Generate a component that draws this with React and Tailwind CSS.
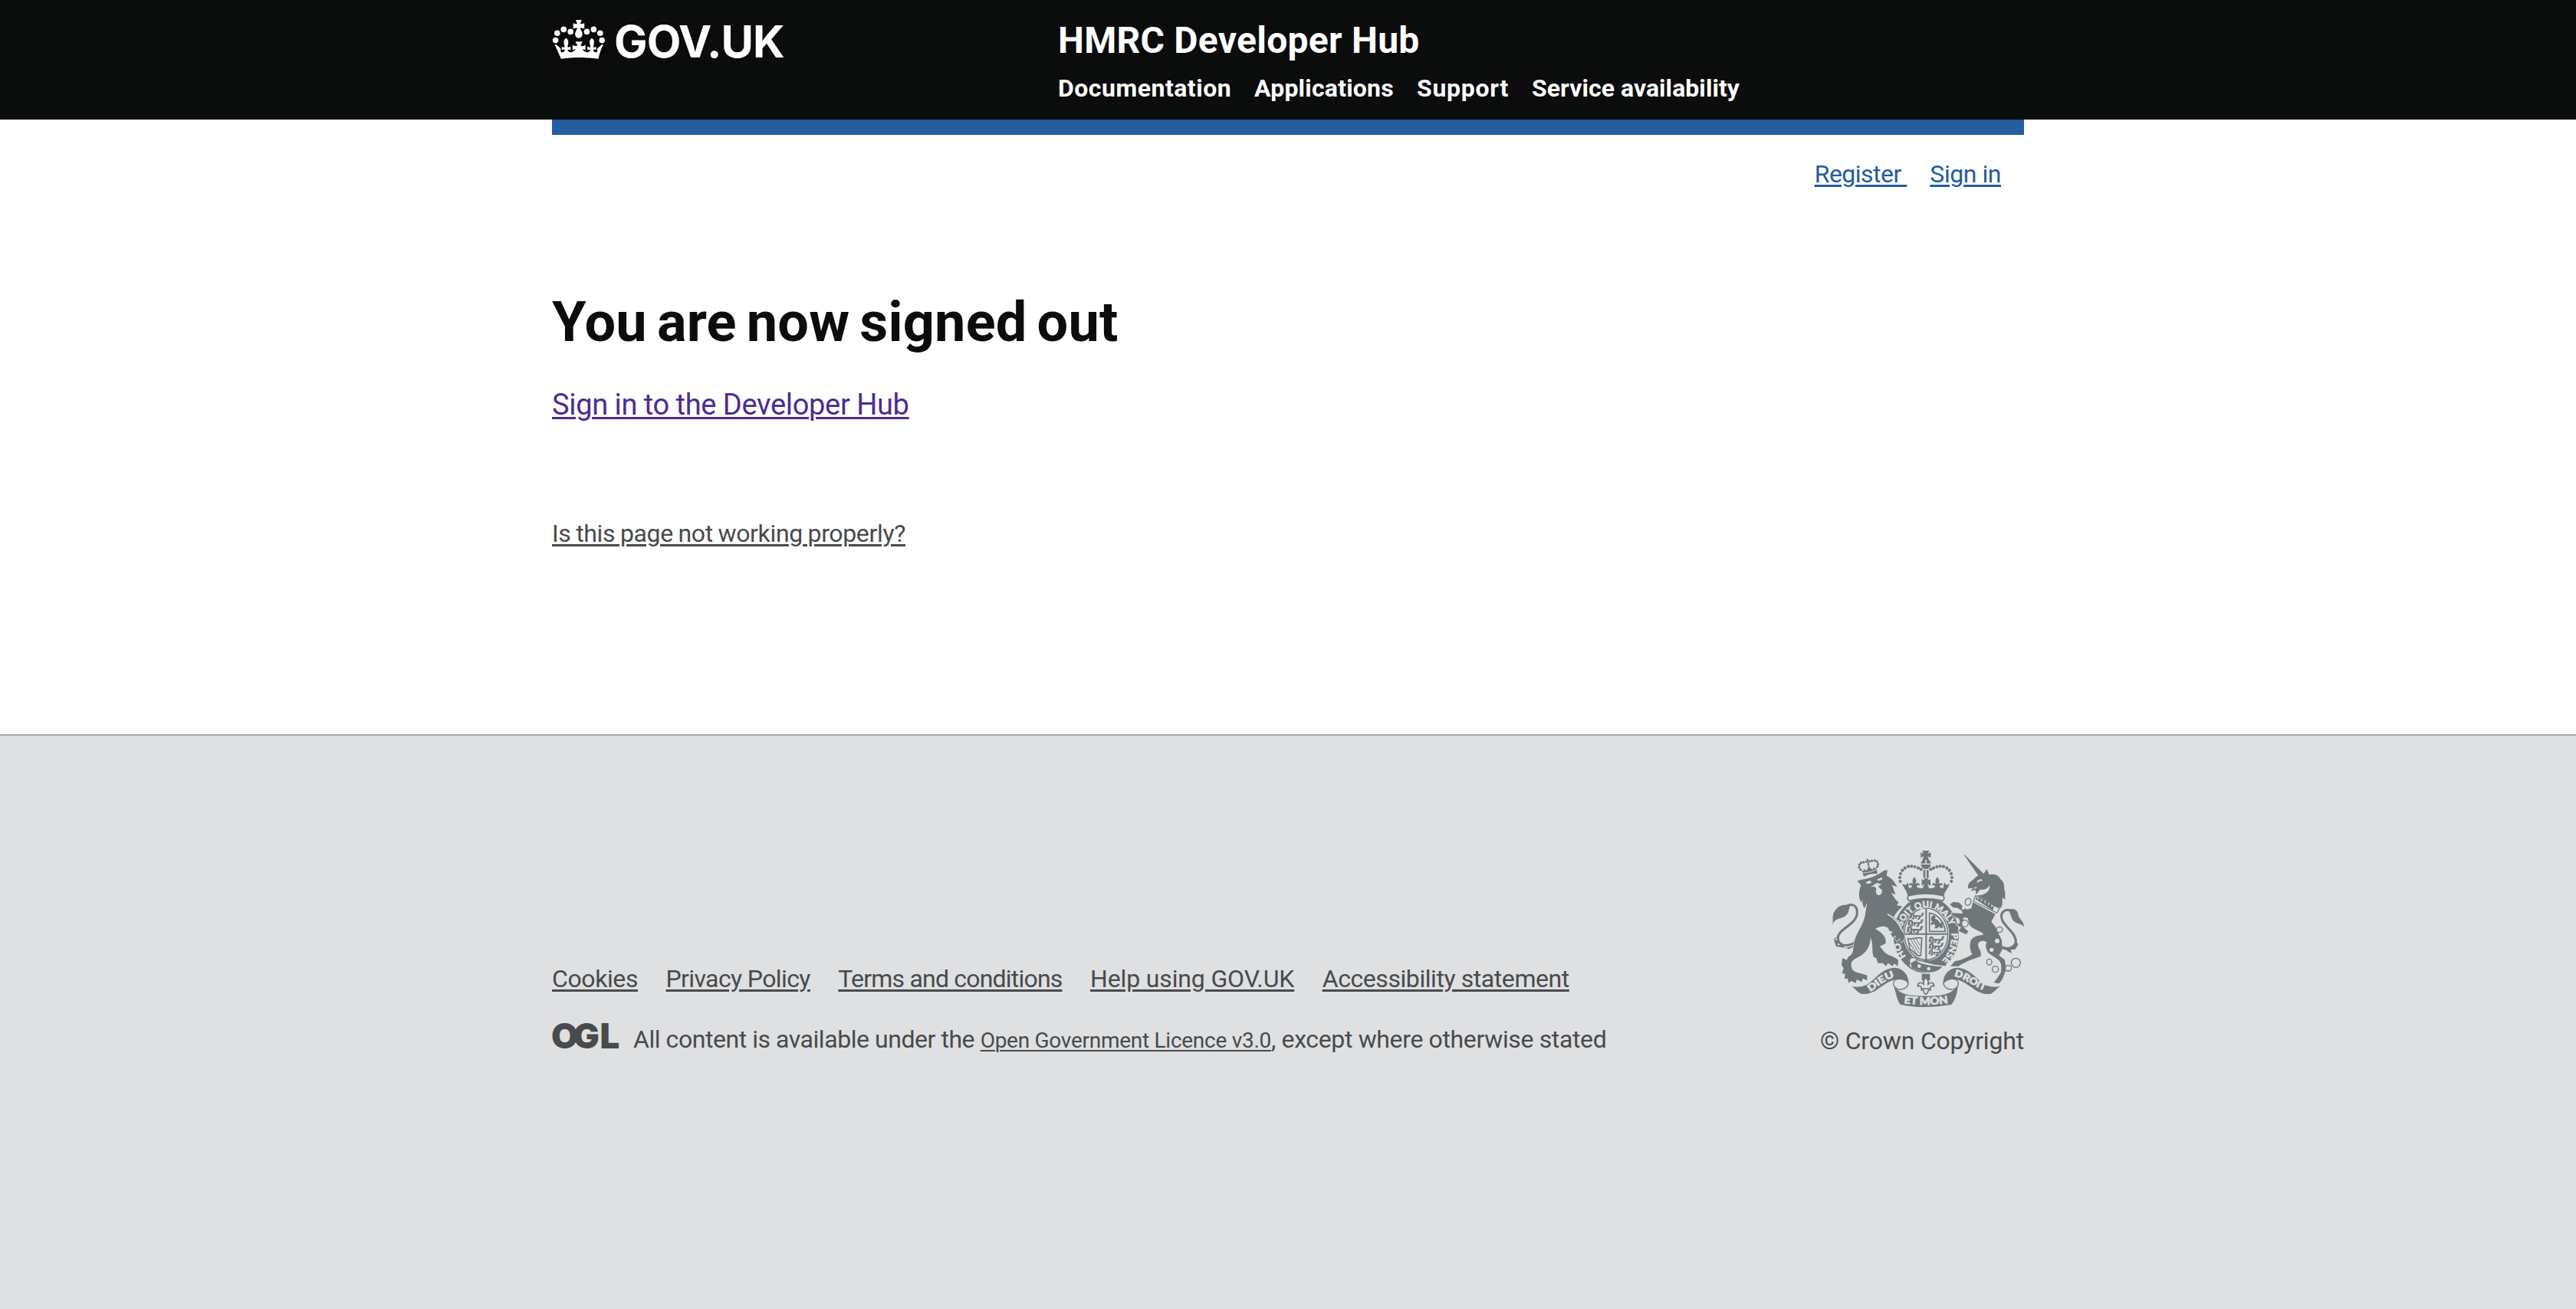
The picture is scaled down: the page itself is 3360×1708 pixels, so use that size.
const navItems = [
  { label: "Documentation", cls: "w-[226px] tracking-[0.5px]" },
  { label: "Applications", cls: "w-[182px] tracking-[0.2px]" },
  { label: "Support", cls: "w-[120px] tracking-[0.7px]" },
  { label: "Service availability", cls: "w-[272px] tracking-[0.05px]" },
];

const footerLinks = [
  { label: "Cookies", cls: "tracking-[-0.4px]" },
  { label: "Privacy Policy", cls: "tracking-[-0.62px]" },
  { label: "Terms and conditions", cls: "tracking-[-0.8px]" },
  { label: "Help using GOV.UK", cls: "tracking-[-0.14px]" },
  { label: "Accessibility statement", cls: "tracking-[-0.43px]" },
];

function Crown() {
  return (
    <svg width="70" height="62" viewBox="0 0 70 62" fill="#fff" className="bg-[#0b0b0c]">
      {[[4.6, 28.6], [6.8, 19.2], [15.2, 14.4], [24.2, 17.4], [45.4, 17.4], [54.4, 14.4], [62.8, 19.2], [65.2, 28.6]].map(([x, y]) => (
        <circle key={`${x}`} cx={x} cy={y} r="3.8" />
      ))}
      <path d="M31 2h7.8l-2 5.2c1.9 0 3.3-.2 5.4-1v7.300c-2-.8-3.500-1-5.400-1 0 2 2.900 4.600 2.900 8 0 3-2.200 5.200-4.800 5.200s-4.800-2.200-4.800-5.200c0-3.400 2.900-6 2.900-8-1.900 0-3.500.2-5.400 1v-7.300c2 .8 3.500 1 5.400 1z" />
      <path d="M3.400 34l2 .2 6.200 5.200c-.6 1.500-.6 3.400.3 4.500 2.300.9 4.800-.5 4.700-2.900-1.300-.8-2.700-.3-3.800.6 0-1.600.2-3.300 0-4.800 1.300.9 2.500 1.200 3.700.7-.3-2-1-4.600-1-6.400 0-2.400 1-4.300 2.900-5.300 1.900 1 2.900 2.900 2.900 5.300 0 1.800-.8 4.400-1 6.400 1.400.5 2.600.2 3.900-.9.100 1.700.1 3.400 0 5.100-1.200-1-2.500-1.400-3.800-.6.3 2.500 2.800 3.700 5.200 2.900 2-.6 3.600-1.900 5-3.600-1.200-.2-2.400.2-3.800 1.400v-7.400c2 1.700 4.300 1.900 6.300 1.400-.5-1.700-1.300-3.600-2.600-5.600h9.400c-1.300 2-2.100 3.900-2.600 5.600 2 .5 4.300.3 6.300-1.400v7.400c-1.400-1.200-2.600-1.600-3.800-1.400 1.400 1.700 3 3 5 3.600 2.400.8 4.900-.4 5.200-2.900-1.300-.8-2.600-.4-3.800.6-.1-1.700-.1-3.400 0-5.100 1.300 1.100 2.500 1.400 3.900.9-.2-2-1-4.600-1-6.400 0-2.400 1-4.300 2.900-5.300 1.900 1 2.900 2.900 2.900 5.300 0 1.800-.7 4.400-1 6.400 1.200.5 2.400.2 3.700-.7-.2 1.500 0 3.200 0 4.800-1.100-.9-2.500-1.400-3.800-.6-.1 2.400 2.400 3.800 4.700 2.900.9-1.100.9-3 .3-4.500l6.200-5.200 2-.2c-2.900 5.600-5 11.600-6.500 18.700-16-2.200-32.600-2.200-48.600 0C8.400 45.600 6.300 39.600 3.400 34z" />
    </svg>
  );
}

function Fleur({ x, y, s }) {
  return (
    <path
      transform={`translate(${x} ${y}) scale(${s})`}
      d="M0-26C8-18 9-8 4 0c8-6 17-3 16 6-4-4-10-3-12 5 4 0 6 3 5 6H-13c-1-3 1-6 5-6-2-8-8-9-12-5-1-9 8-12 16-6-5-8-4-18 4-26z"
    />
  );
}

function WalkingLion({ x, y, s = 1 }) {
  return (
    <path
      transform={`translate(${x} ${y}) scale(${s})`}
      fill="none"
      stroke="#6f777b"
      strokeWidth="6"
      strokeLinejoin="round"
      d="M2 14l6-3-2-6 5-3 6 4v6h24l5 4M10 15l-8 5M17 14v9h-7M28 14l-3 9M40 13l2 5-3 6h-6M44 13l9-3-1-7 7-2"
    />
  );
}

function RoyalArms() {
  const bg = "#dee0e2";
  const dark = "#6f777b";
  const leftDots = [[356, 180], [354, 165], [357, 150], [364, 137], [374, 128], [387, 122], [400, 121], [413, 123], [426, 128], [437, 133]];
  return (
    <svg width="250" height="205" viewBox="90 60 750 615" fill={dark}>
      <defs>
        <path id="motto-top" d="M363 357A101 120 0 0 1 551 360" />
        <path id="motto-right" d="M556 382A101 126 0 0 1 513 495" />
        <path id="motto-left" d="M379 474A105 126 0 0 1 352 414" />
        <path id="dieu" d="M238 612C266 596 292 564 338 554" />
        <path id="etmon" d="M370 657Q456 669 544 657" />
        <path id="droit" d="M566 552C608 558 638 590 690 609" />
      </defs>

      {/* Garter */}
      <ellipse cx="457" cy="390" rx="133" ry="154" fill={bg} />
      <ellipse cx="457" cy="390" rx="128" ry="149" />
      <ellipse cx="457" cy="386" rx="90" ry="106" fill={bg} />
      <ellipse cx="457" cy="386" rx="85" ry="101" fill="none" stroke={dark} strokeWidth="4" />
      <path d="M454 286h6v204h-6zM372 383h170v6H372z" />
      <WalkingLion x={392} y={304} s={0.95} />
      <WalkingLion x={384} y={330} s={1.05} />
      <WalkingLion x={380} y={356} s={1.1} />
      <WalkingLion x={466} y={396} s={1.05} />
      <WalkingLion x={466} y={422} s={1} />
      <WalkingLion x={466} y={448} s={0.85} />
      <path fill="none" stroke={dark} strokeWidth="5" d="M470 304C502 308 528 338 532 376H470Z" />
      <path d="M478 318l8-6 8 6-2 8 12 6 8 12 12-8-4 14 4 10-10 4-6-8-6 8h-14l6-8-6-10-10 6-4-6 8-8-6-6z" />
      <path fill="none" stroke={dark} strokeWidth="5" d="M386 404C402 410 420 396 440 402L436 470C420 476 410 454 394 446Z" />
      <path fill="none" stroke={dark} strokeWidth="3" d="M398 410L430 462M408 408L432 448M418 406L434 432M392 420L420 464" />
      {/* Buckle and strap */}
      <path d="M446 492L456 484 470 492 496 486 470 502Z" />
      <path fill={bg} d="M388 486L404 472 416 476 424 490 490 506 540 512 524 530 470 544 420 528 394 518Z" />
      <path d="M398 500L414 490C440 506 480 512 520 514C506 532 480 538 460 536C434 534 412 526 398 514Z" />
      <path fill="none" stroke={dark} strokeWidth="5" d="M408 520C392 524 384 508 394 500C386 488 396 474 410 478C420 478 424 488 418 496" />
      <circle cx="430" cy="512" r="7" fill={bg} />
      <circle cx="467" cy="522" r="7" fill={bg} />
      <g fill={bg} stroke={bg} strokeWidth="1.500" fontFamily="Lato, sans-serif" fontWeight="900" fontSize="35">
        <text><textPath href="#motto-top" textLength="252" lengthAdjust="spacingAndGlyphs">SOIT QUI MALY</textPath></text>
        <text><textPath href="#motto-right" textLength="118" lengthAdjust="spacingAndGlyphs">PENSE</textPath></text>
        <text><textPath href="#motto-left" textLength="62" lengthAdjust="spacingAndGlyphs">HO</textPath></text>
      </g>

      {/* Lion tail */}
      <path fill="none" stroke={dark} strokeWidth="9" d="M132 292C150 264 188 262 187 305C184 350 112 366 112 402C112 430 146 442 182 416" />
      <path d="M90 350C96 330 84 310 106 288C120 270 145 270 160 276C152 288 158 304 138 318C120 328 100 324 90 350Z" />
      <path d="M112 393L100 408 114 413 110 430 130 428 140 442 166 434 190 418 188 428 156 445 124 438 104 434 96 406Z" />
      {/* Lion body */}
      <path
        stroke={bg}
        strokeWidth="4"
        paintOrder="stroke"
        d="M188 178L212 172C240 168 268 156 286 138L306 136 302 158C322 166 334 182 344 202L322 194C330 206 332 220 338 232L320 226C332 240 334 252 350 262L342 274 364 278 346 296 330 318C348 338 360 352 364 378C376 386 374 408 362 420L352 402 344 416 334 402 340 392 326 398 318 384 328 378 314 374 308 362C292 352 272 356 258 366C282 380 304 396 298 424L276 434 290 452C304 472 330 470 348 488L346 512 332 502 326 512 308 500 300 512 288 500 268 500 262 480 252 476C242 452 252 430 240 400C238 430 228 452 206 468C184 482 160 488 164 510C166 530 178 536 200 540L226 548 226 568 210 560 204 574 186 564 182 578 164 570 154 578 150 560 138 562 140 542 128 540 134 520 126 508 130 480 146 488 152 476C180 462 168 436 178 408C188 376 210 352 218 314L226 262 216 286C206 270 206 254 210 240L204 264C190 244 194 218 202 196Z"
      />
      <g fill={bg}>
        <path d="M220 184L238 176 244 186 228 190Z M266 172L286 164 284 174 268 178Z" />
        <path d="M240 202L264 186 284 192 270 198 276 208 284 212C288 236 264 242 260 222L262 206 252 200Z" />
      </g>
      <path fill="none" stroke={bg} strokeWidth="5" d="M203 168C240 166 270 152 296 132M306 308C326 318 348 338 364 374" />
      {/* Lion crown */}
      <g transform="rotate(-10 234 130)">
        <path d="M204 130L210 136 214 126 220 136 228 130 234 118 240 130 248 136 254 126 258 136 264 130 262 156Q234 148 208 158Z" />
        <path d="M228 92h10l-2 8 8-3v10l-8-3 2 14h-8l2-14-8 3V97l8 3z" />
        {[[200, 128], [196, 118], [199, 108], [207, 102], [217, 102], [250, 102], [261, 103], [269, 109], [271, 119], [267, 128]].map(([x, y]) => (
          <circle key={`${x}-${y}`} cx={x} cy={y} r="5" />
        ))}
      </g>
      <path fill="none" stroke={bg} strokeWidth="2.500" d="M206 148Q240 146 268 132" />

      {/* Unicorn */}
      <path d="M604 74L610 78 684 152 664 162Z" />
      <path d="M656 160L680 154 694 132 704 154C730 148 742 160 748 172C762 182 764 198 762 210C770 224 764 238 767 252L756 244C752 258 760 264 750 284L730 280 690 254 652 234C682 238 708 222 706 196C694 210 688 214 672 212C662 214 662 224 652 230L650 214 632 218 640 206 622 208C618 196 624 186 630 182C642 174 648 166 656 160Z" />
      <path fill={bg} d="M654 180L672 170 678 178 664 180 660 186ZM640 208L656 200 652 208Z" />
      <path fill={bg} stroke={dark} strokeWidth="3.500" d="M650 236L744 286 734 304 642 258Z" />
      <path d="M650 250l4-10 6 12 8-12 4 18 12-12 2 20 12-12 2 20 12-12 0 20 12-10 -6 22z" />
      <path
        stroke={bg}
        strokeWidth="4"
        paintOrder="stroke"
        d="M640 262L728 308 712 338C724 352 736 366 742 388L754 412C750 426 762 440 750 456L742 470 764 486C768 508 774 520 762 546C758 560 750 572 742 580L722 576 736 558 750 536C752 512 752 496 738 486L700 460C690 444 688 430 694 418C674 408 660 416 660 430C662 446 676 452 670 474C640 484 606 496 584 512L552 512 570 492C598 490 622 474 638 466C626 446 626 424 634 408C646 392 664 394 682 388C672 374 652 372 636 360C620 348 626 334 618 322L602 322 604 348 594 352 622 376 614 388 584 374 594 360 576 350 590 342 586 326 560 314 556 304 600 306 598 296 580 284 562 282 550 270 564 260 588 264 600 278 616 290 634 286Z"
      />
      {/* Unicorn tail */}
      <path fill="none" stroke={dark} strokeWidth="9" d="M798 300C770 280 744 300 754 330C764 358 812 384 808 420C806 440 782 452 754 440" />
      <path d="M778 290C800 284 816 290 818 314C824 332 838 332 840 358C830 346 816 348 806 340C788 330 790 306 778 290Z" />
      <path d="M752 432C774 442 796 440 806 414L818 426 806 446 788 448 792 462 774 452Z" />
      {/* Chain */}
      <g fill="none" stroke={dark} strokeWidth="4">
        <ellipse cx="621" cy="260" rx="11" ry="14" transform="rotate(20 621 260)" fill={bg} />
        <circle cx="609" cy="345" r="13" fill={bg} />
        <ellipse cx="744" cy="369" rx="12" ry="11" fill={bg} />
        <ellipse cx="704" cy="496" rx="10" ry="12" />
        <circle cx="728" cy="524" r="12" />
        <ellipse cx="778" cy="520" rx="13" ry="11" />
        <circle cx="808" cy="499" r="18" />
      </g>
      <circle cx="735" cy="413" r="9" fill={bg} />
      <circle cx="713" cy="448" r="8" fill={bg} />
      <circle cx="602" cy="285" r="6" fill={bg} />

      {/* Central crown */}
      <path d="M442 60h27l-6 12 12-6v22l-12-6 5 14h-25l5-14-12 6V66l12 6z" />
      <path d="M436 110Q440 94 454 94V110ZM459 94Q472 94 476 110H459ZM436 114H476Q472 132 456 132Q440 132 436 114Z" />
      <path d="M446 136h8v30h-8zM459 136h8v30h-8z" />
      {leftDots.map(([x, y]) => (
        <g key={`${x}-${y}`}>
          <circle cx={x} cy={y} r="6.200" />
          <circle cx={912 - x} cy={y} r="6.200" />
        </g>
      ))}
      <Fleur x={411} y={190} s={1.05} />
      <Fleur x={501} y={190} s={1.05} />
      <path d="M440 172l12 4-4-8h18l-4 8 12-4v26l-12-8 6 16h-24l6-16-10 8z" />
      <path d="M364 190L378 194 386 184 390 206 420 204 440 208 456 198 472 208 494 204 524 206 528 184 536 194 548 190C544 208 530 218 526 238Q456 222 386 238C382 218 370 208 364 190Z" />
      <path fill={bg} stroke={dark} strokeWidth="5" d="M388 236Q456 220 524 236Q532 246 522 256Q456 240 390 256Q380 246 388 236Z" />

      {/* Ribbons */}
      <path d="M166 591C196 596 220 592 240 574C270 548 290 522 330 518C366 516 392 550 388 584C376 600 360 602 346 600C360 588 360 570 350 564C318 562 296 584 270 600C248 618 222 624 202 620C186 612 180 600 166 591Z" />
      <path fill={bg} stroke={dark} strokeWidth="4" d="M330 575C336 556 372 560 386 576C388 596 366 606 346 602C336 596 326 590 330 575Z" />
      <path d="M746 591C716 596 692 592 672 574C642 548 622 522 582 518C546 516 520 550 524 584C536 600 552 602 566 600C552 588 552 570 562 564C594 562 616 584 642 600C664 618 690 624 710 620C726 612 732 600 746 591Z" />
      <path fill={bg} stroke={dark} strokeWidth="4" d="M582 575C576 556 540 560 526 576C524 596 546 606 566 602C576 596 586 590 582 575Z" />
      <path d="M328 584C344 610 370 624 400 626Q456 632 512 626C542 622 568 610 582 584C580 610 574 640 556 662Q510 672 456 672Q402 672 356 662C340 640 340 614 328 584Z" />
      <g fill={bg} stroke={bg} strokeWidth="2" fontFamily="Lato, sans-serif" fontWeight="900">
        <text fontSize="37"><textPath href="#dieu" textLength="112" lengthAdjust="spacingAndGlyphs">DIEU</textPath></text>
        <text fontSize="41"><textPath href="#etmon" textLength="174" lengthAdjust="spacingAndGlyphs">ET MON</textPath></text>
        <text fontSize="37"><textPath href="#droit" textLength="132" lengthAdjust="spacingAndGlyphs">DROIT</textPath></text>
      </g>
      {/* Pendant fleur-de-lis */}
      <path d="M440 542h32v26h-32z" />
      <path
        fill={bg}
        stroke={dark}
        strokeWidth="5"
        strokeLinejoin="round"
        d="M456 556C464 564 468 574 464 584C474 572 488 576 488 590L478 590C474 592 472 598 474 606H466L462 618 456 622 450 618 446 606H438C440 598 438 592 434 590L424 590C424 576 438 572 448 584C444 574 448 564 456 556Z"
      />
      <path d="M438 598h36v5h-36z" />
    </svg>
  );
}

export default function App() {
  return (
    <div className="flex min-h-[1708px] w-[3360px] flex-col bg-white font-['Roboto','Liberation_Sans',sans-serif] text-[32px] leading-[40px] text-[#0b0c0c]">
      <header className="h-[156px] bg-[#0b0c0c] text-white">
        <div className="mx-auto flex w-[1920px]">
          <a className="flex w-[660px] shrink-0 items-start pt-[24px]">
            <Crown />
            <span className="ml-[11px] font-['Inter',sans-serif] text-[58px] font-bold leading-[60px] tracking-[-0.9px]">GOV.UK</span>
          </a>
          <div className="pt-[27px]">
            <div className="text-[48px] font-bold leading-[52px] tracking-[0.27px]">HMRC Developer Hub</div>
            <nav className="mt-4 flex gap-[30px] font-bold">
              {navItems.map((n) => (
                <a key={n.label} className={`whitespace-nowrap ${n.cls}`}>{n.label}</a>
              ))}
            </nav>
          </div>
        </div>
      </header>
      <div className="mx-auto h-[20px] w-[1920px] bg-[#245c9f]" />

      <main className="mx-auto flex h-[782px] w-[1920px] flex-col items-start">
        <div className="mt-[31px] flex gap-[30px] self-end pr-[30px] text-[#245c9f]">
          <a className="whitespace-pre underline decoration-[3px] underline-offset-[3px] tracking-[-0.5px]">{"Register "}</a>
          <a className="underline decoration-[3px] underline-offset-[3px] tracking-[-0.45px]">Sign in</a>
        </div>
        <h1 className="mt-[134px] text-[72px] font-bold leading-[80px] tracking-[0.2px] [word-spacing:-5px]">You are now signed out</h1>
        <a className="mt-[42px] text-[38px] leading-[50px] tracking-[-0.3px] [word-spacing:-0.5px] text-[#4c2c92] underline decoration-[3px] underline-offset-[3px]">
          Sign in to the Developer Hub
        </a>
        <a className="mt-[123px] tracking-[-0.35px] [word-spacing:-0.9px] text-[#484a4c] underline decoration-[3px] underline-offset-[3px]">
          Is this page not working properly?
        </a>
      </main>

      <footer className="grow border-t-2 border-[#a1acb2] bg-[#dee0e2] text-[#484a4c]">
        <div className="mx-auto flex w-[1920px] justify-between pt-[150px]">
          <div className="pt-[147px]">
            <div className="flex gap-[36.500px]">
              {footerLinks.map((l) => (
                <a key={l.label} className={`whitespace-nowrap underline decoration-[3px] underline-offset-[3px] ${l.cls}`}>{l.label}</a>
              ))}
            </div>
            <div className="mt-[39px] flex">
              <svg width="86" height="36" viewBox="0 0 86 36" className="-mt-[2px] mr-[20px] shrink-0 overflow-visible">
                <text x="-1 27.500 62.500" y="34" fontFamily="Inter, sans-serif" fontWeight="900" fontSize="45.500" fill="#484a4c">OGL</text>
              </svg>
              <p className="whitespace-pre tracking-[-0.45px]">
                {"All content is available under the "}
                <a className="text-[28px] tracking-[-0.27px] underline decoration-2 underline-offset-[3px]">Open Government Licence v3.0</a>
                <span className="tracking-[-0.36px]">, except where otherwise stated</span>
              </p>
            </div>
          </div>
          <div className="flex flex-col items-end">
            <RoyalArms />
            <a className="mt-[23px] tracking-[-0.18px]">© Crown Copyright</a>
          </div>
        </div>
      </footer>
    </div>
  );
}
